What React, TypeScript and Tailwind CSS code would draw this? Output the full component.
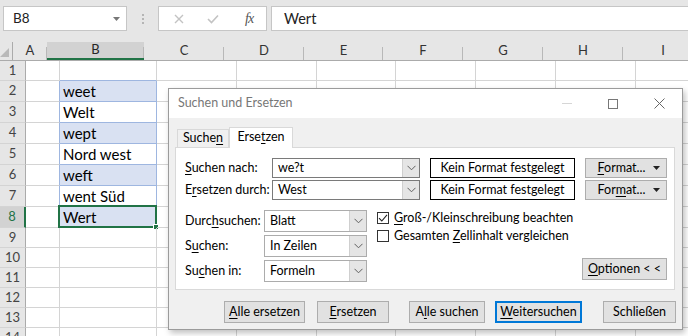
import React from 'react'

const cols = [
  { l: 'A', w: 'w-[34px]' },
  { l: 'B', w: 'w-[97px]' },
  { l: 'C', w: 'w-[80px]' },
  { l: 'D', w: 'w-[80px]' },
  { l: 'E', w: 'w-[79px]' },
  { l: 'F', w: 'w-[80px]' },
  { l: 'G', w: 'w-[80px]' },
  { l: 'H', w: 'w-[80px]' },
  { l: 'I', w: 'w-[80px]' },
]

const rows = [
  { n: 1, h: 'h-[20px]', v: '' },
  { n: 2, h: 'h-[21px]', v: 'weet', hl: true },
  { n: 3, h: 'h-[21px]', v: 'Welt' },
  { n: 4, h: 'h-[21px]', v: 'wept', hl: true },
  { n: 5, h: 'h-[21px]', v: 'Nord west' },
  { n: 6, h: 'h-[21px]', v: 'weft', hl: true },
  { n: 7, h: 'h-[21px]', v: 'went Süd' },
  { n: 8, h: 'h-[21px]', v: 'Wert', hl: true, sel: true },
  { n: 9, h: 'h-[20px]', v: '' },
  { n: 10, h: 'h-[20px]', v: '' },
  { n: 11, h: 'h-[20px]', v: '' },
  { n: 12, h: 'h-[20px]', v: '' },
  { n: 13, h: 'h-[20px]', v: '' },
  { n: 14, h: 'h-[20px]', v: '' },
]

const U = ({ children }: { children: React.ReactNode }) => (
  <span className="underline underline-offset-[2px] decoration-[1px]">{children}</span>
)

function Chevron() {
  return (
    <svg width="9" height="6" viewBox="0 0 9 6" className="text-[#606060]">
      <path d="M0.5 0.8 L4.5 4.8 L8.5 0.8" fill="none" stroke="currentColor" strokeWidth="1" />
    </svg>
  )
}

function Combo({ value, w, h, border }: { value: string; w: string; h: string; border: string }) {
  return (
    <div className={`flex ${w} ${h} border ${border} bg-white`}>
      <div className="flex-1 pl-[5px] flex items-center text-black">{value}</div>
      <div className="w-[17px] bg-[#e5e5e5] border-l border-[#cfcfcf] flex items-center justify-center">
        <Chevron />
      </div>
    </div>
  )
}

function Btn({ children, w, cls = '', border = 'border border-[#adadad]' }: { children: React.ReactNode; w: string; cls?: string; border?: string }) {
  return (
    <div className={`${w} h-[22px] bg-[#e1e1e1] ${border} flex items-center justify-center text-black whitespace-nowrap ${cls}`}>
      {children}
    </div>
  )
}

function FormatBtn({ children }: { children: React.ReactNode }) {
  return (
    <div className="w-[82px] h-[20px] bg-[#e1e1e1] border border-[#adadad] flex items-center text-black">
      <span className="flex-1 text-center pl-[4px]">{children}</span>
      <svg width="7" height="4" viewBox="0 0 7 4" className="mr-[6px]">
        <path d="M0 0 H7 L3.5 4 Z" fill="#222" />
      </svg>
    </div>
  )
}

function Check({ checked }: { checked?: boolean }) {
  return (
    <div className="w-[12px] h-[12px] border border-[#333] bg-white flex items-center justify-center">
      {checked && (
        <svg width="10" height="10" viewBox="0 0 10 10">
          <path d="M1 5.2 L3.8 8 L9 1.8" fill="none" stroke="#222" strokeWidth="1.1" />
        </svg>
      )}
    </div>
  )
}

function Dialog() {
  return (
    <div className="absolute left-[168px] top-[88px] w-[515px] h-[242px] bg-[#f0f0f0] border border-[#9b9b9b] shadow-[2px_3px_6px_rgba(0,0,0,0.25)] font-['Lato',sans-serif] text-[12.5px] text-black whitespace-nowrap">
      <div className="h-[29px] bg-white flex items-center">
        <div className="pl-[9px] flex-1 text-[#777]">Suchen und Ersetzen</div>
        <div className="w-[46px] h-full flex items-center justify-center">
          <div className="w-[10px] h-px bg-[#d6d6d6]" />
        </div>
        <div className="w-[46px] h-full flex items-center justify-center">
          <div className="w-[10px] h-[10px] border border-[#777]" />
        </div>
        <div className="w-[46px] h-full flex items-center justify-center">
          <svg width="11" height="11" viewBox="0 0 11 11">
            <path d="M0.5 0.5 L10.5 10.5 M10.5 0.5 L0.5 10.5" stroke="#666" strokeWidth="1" />
          </svg>
        </div>
      </div>

      <div className="mx-[6px]">
        <div className="h-[29px] flex items-end pl-[2px]">
          <div className="w-[52px] h-[18px] border border-b-0 border-[#d9d9d9] bg-[#f0f0f0] flex items-center justify-center">
            Suche<U>n</U>
          </div>
          <div className="w-[64px] h-[21px] -mb-px border border-b-0 border-[#d9d9d9] bg-white flex items-center justify-center relative z-10 pb-[2px]">
            Erse<U>t</U>zen
          </div>
        </div>

        <div className="h-[143px] w-[500px] bg-white border border-[#d9d9d9] pl-[9px] pt-[10px]">
          <div className="flex items-center h-[20px]">
            <div className="w-[87px]"><U>S</U>uchen nach:</div>
            <Combo value="we?t" w="w-[148px]" h="h-[20px]" border="border-[#7a7a7a]" />
            <div className="ml-[10px] w-[145px] h-[20px] border border-black flex items-center justify-center">Kein Format festgelegt</div>
            <div className="ml-[10px]"><FormatBtn><U>F</U>ormat...</FormatBtn></div>
          </div>
          <div className="flex items-center h-[20px] mt-[2px]">
            <div className="w-[87px]">E<U>r</U>setzen durch:</div>
            <Combo value="West" w="w-[148px]" h="h-[20px]" border="border-[#7a7a7a]" />
            <div className="ml-[10px] w-[145px] h-[20px] border border-black flex items-center justify-center">Kein Format festgelegt</div>
            <div className="ml-[10px]"><FormatBtn>For<U>m</U>at...</FormatBtn></div>
          </div>

          <div className="flex mt-[10px] pr-[7px]">
            <div className="flex flex-col gap-[3px]">
              <div className="flex items-center">
                <div className="w-[79px]">Durc<U>h</U>suchen:</div>
                <Combo value="Blatt" w="w-[103px]" h="h-[22px]" border="border-[#acacac]" />
              </div>
              <div className="flex items-center">
                <div className="w-[79px]">S<U>u</U>chen:</div>
                <Combo value="In Zeilen" w="w-[103px]" h="h-[22px]" border="border-[#acacac]" />
              </div>
              <div className="flex items-center">
                <div className="w-[79px]">Su<U>c</U>hen in:</div>
                <Combo value="Formeln" w="w-[103px]" h="h-[22px]" border="border-[#acacac]" />
              </div>
            </div>
            <div className="flex-1 ml-[10px] pt-[2px] flex flex-col">
              <div className="h-[18px] flex items-start gap-[5px]">
                <Check checked />
                <span className="leading-[12px]"><U>G</U>roß-/Kleinschreibung beachten</span>
              </div>
              <div className="h-[18px] flex items-start gap-[5px]">
                <Check />
                <span className="leading-[12px]">Gesamten <U>Z</U>ellinhalt vergleichen</span>
              </div>
            </div>
            <div className="self-end mb-[2px]">
              <Btn w="w-[85px]"><span><U>O</U>ptionen &lt; &lt;</span></Btn>
            </div>
          </div>
        </div>
      </div>

      <div className="flex mt-[11px]">
        <Btn w="w-[81px]" cls="ml-[55px]"><span><U>A</U>lle ersetzen</span></Btn>
        <Btn w="w-[72px]" cls="ml-[12px]"><span><U>E</U>rsetzen</span></Btn>
        <Btn w="w-[76px]" cls="ml-[20px]"><span>A<U>l</U>le suchen</span></Btn>
        <Btn w="w-[87px]" cls="ml-[10px]" border="border-2 border-[#0078d7]"><span><U>W</U>eitersuchen</span></Btn>
        <Btn w="w-[73px]" cls="ml-[21px]"><span>Schließen</span></Btn>
      </div>
    </div>
  )
}

export default function App() {
  return (
    <div className="relative w-[688px] h-[336px] overflow-hidden bg-white font-['Lato',sans-serif]">
      {/* formula bar */}
      <div className="h-[42px] bg-[#e6e6e6] flex items-start pt-[6px]">
        <div className="ml-[3px] w-[124px] h-[25px] bg-white border border-[#c6c6c6] flex items-center pl-[9px] pr-[6px]">
          <span className="flex-1 text-[13.5px] text-[#222]">B8</span>
          <svg width="7" height="4" viewBox="0 0 7 4"><path d="M0 0 H7 L3.5 4 Z" fill="#777" /></svg>
        </div>
        <div className="w-[31px] h-[25px] flex flex-col items-center justify-center gap-[2px]">
          <div className="w-[2px] h-[2px] bg-[#b5b5b5]" />
          <div className="w-[2px] h-[2px] bg-[#b5b5b5]" />
          <div className="w-[2px] h-[2px] bg-[#b5b5b5]" />
        </div>
        <div className="w-[109px] h-[25px] bg-white border border-[#c6c6c6] flex items-center">
          <svg width="10" height="10" viewBox="0 0 10 10" className="ml-[15px]">
            <path d="M1 1 L9 9 M9 1 L1 9" stroke="#c3c3c3" strokeWidth="1.4" />
          </svg>
          <svg width="12" height="10" viewBox="0 0 12 10" className="ml-[23px]">
            <path d="M1 5 L4.5 8.5 L11 1.5" fill="none" stroke="#c3c3c3" strokeWidth="1.6" />
          </svg>
          <span className="ml-[26px] font-['Liberation_Serif',serif] italic text-[14px] text-[#555] tracking-[-1px]">fx</span>
        </div>
        <div className="ml-[4px] flex-1 h-[25px] bg-white border border-[#c6c6c6] border-r-0 flex items-center pl-[12px] text-[14.5px] text-[#222]">
          Wert
        </div>
      </div>

      {/* column headers */}
      <div className="flex h-[19px] bg-[#e6e6e6] border-b border-[#ababab] text-[13px] text-[#333]">
        <div className="w-[26px] h-full border-r border-[#ababab] flex items-end justify-end pr-[3px] pb-[3px]">
          <svg width="9" height="9" viewBox="0 0 9 9"><path d="M9 0 V9 H0 Z" fill="#b9b9b9" /></svg>
        </div>
        {cols.map((c) => (
          <div
            key={c.l}
            className={`${c.w} h-full shrink-0 flex items-center justify-center relative ${c.l === 'B' ? 'bg-[#d2d2d2] border-b-2 border-[#217346] text-[#262626]' : ''}`}
          >
            {c.l}
            <div className="absolute right-0 top-[5px] bottom-0 w-px bg-[#b8b8b8]" />
          </div>
        ))}
      </div>

      {/* rows */}
      <div>
        {rows.map((r) => (
          <div key={r.n} className={`flex ${r.h}`}>
            <div
              className={`w-[26px] shrink-0 h-full flex items-center justify-center text-[13px] border-b border-[#d4d4d4] ${r.sel ? 'bg-[#d2d2d2] text-[#217346] border-r-2 border-r-[#217346]' : 'bg-[#e6e6e6] text-[#444] border-r border-r-[#ababab]'}`}
            >
              {r.n}
            </div>
            {cols.map((c) => {
              const isB = c.l === 'B'
              const inRange = r.n >= 2 && r.n <= 8
              let cls = `${c.w} shrink-0 h-full border-r border-b border-[#d4d4d4]`
              if (c.l === 'A' && inRange) cls = `${c.w} shrink-0 h-full border-b border-b-[#d4d4d4] border-r border-r-[#9eb6e0]`
              if (isB && r.n === 1) cls = `${c.w} shrink-0 h-full border-r border-r-[#d4d4d4] border-b border-b-[#9eb6e0]`
              if (isB && inRange) cls = `${c.w} shrink-0 h-full border-r border-b border-[#9eb6e0] ${r.hl ? 'bg-[#d9e1f2]' : 'bg-white'}`
              return (
                <div key={c.l} className={`${cls} relative`}>
                  {isB && r.v && (
                    <div className="pl-[3px] leading-[20px] text-[15px] text-black whitespace-nowrap">{r.v}</div>
                  )}
                  {isB && r.sel && (
                    <div className="absolute -left-[2px] -top-[2px] -right-[1px] -bottom-[1px] border-2 border-[#217346]">
                      <div className="absolute -right-[4px] -bottom-[4px] w-[6px] h-[6px] bg-[#217346] border border-white" />
                    </div>
                  )}
                </div>
              )
            })}
          </div>
        ))}
      </div>

      <Dialog />
    </div>
  )
}
